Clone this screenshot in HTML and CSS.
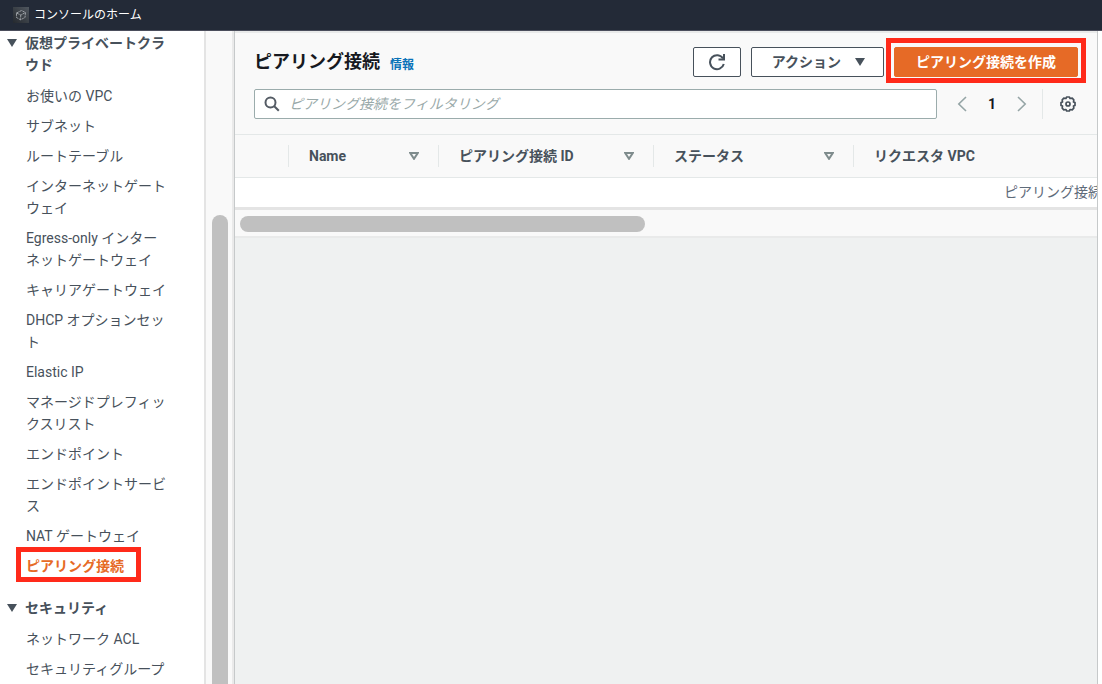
FILE: index.html
```html
<!DOCTYPE html>
<html lang="ja">
<head>
<meta charset="utf-8">
<title>ピアリング接続</title>
<link rel="stylesheet" href="styles.css">
</head>
<body>
<header class="topbar">
  <svg class="topbar-icon" viewBox="0 0 16 16" aria-hidden="true">
    <defs><linearGradient id="tile" x1="0" y1="1" x2="1" y2="0"><stop offset="0" stop-color="#25292e"/><stop offset="1" stop-color="#50575f"/></linearGradient></defs>
    <rect width="16" height="16" fill="url(#tile)"/>
    <path d="M3.500 6 8.500 3.500l4 2-.5 5L7.500 12.800 3.500 10.500zM3.500 6l4.300 2 4.700-2.500M7.800 8l-.3 4.800" fill="none" stroke="#b4b8bd" stroke-width=".8" stroke-dasharray="2.500 .8"/>
  </svg>
  <a class="topbar-link" href="#">コンソールのホーム</a>
</header>
<div class="layout">
  <nav class="sidebar">
    <section class="group">
      <button class="group-title" type="button"><span class="caret"></span><span>仮想プライベートクラウド</span></button>
      <ul class="links">
        <li><a href="#">お使いの VPC</a></li>
        <li><a href="#">サブネット</a></li>
        <li><a href="#">ルートテーブル</a></li>
        <li><a href="#">インターネットゲートウェイ</a></li>
        <li><a href="#">Egress-only インターネットゲートウェイ</a></li>
        <li><a href="#">キャリアゲートウェイ</a></li>
        <li><a href="#">DHCP オプションセット</a></li>
        <li><a href="#">Elastic IP</a></li>
        <li><a href="#">マネージドプレフィックスリスト</a></li>
        <li><a href="#">エンドポイント</a></li>
        <li><a href="#">エンドポイントサービス</a></li>
        <li><a href="#">NAT ゲートウェイ</a></li>
        <li><a class="current" href="#" aria-current="page">ピアリング接続</a></li>
      </ul>
    </section>
    <section class="group">
      <button class="group-title" type="button"><span class="caret"></span><span>セキュリティ</span></button>
      <ul class="links">
        <li><a href="#">ネットワーク ACL</a></li>
        <li><a href="#">セキュリティグループ</a></li>
      </ul>
    </section>
  </nav>
  <div class="vscroll"><div class="vscroll-thumb"></div></div>
  <main class="panel">
    <div class="panel-head">
      <div class="title-row">
        <h1>ピアリング接続</h1>
        <a class="info" href="#">情報</a>
        <div class="actions">
          <button class="btn btn-refresh" type="button" aria-label="更新">
            <svg width="18" height="18" viewBox="0 0 18 18" fill="none" stroke="#47515b" stroke-width="2"><path d="M15.800 11a7 7 0 1 1-.8-5.500"/><path d="M16 1v5.500h-5.500"/></svg>
          </button>
          <button class="btn btn-action" type="button">アクション<span class="caret"></span></button>
          <button class="btn btn-create" type="button">ピアリング接続を作成</button>
        </div>
      </div>
      <div class="filter-row">
        <div class="search">
          <svg width="16" height="16" viewBox="0 0 16 16" fill="none" stroke="#545b64" stroke-width="2"><circle cx="6.500" cy="6.500" r="5"/><path d="m10 10 4.800 4.800"/></svg>
          <input type="search" aria-label="ピアリング接続をフィルタリング" placeholder="ピアリング接続をフィルタリング">
        </div>
        <div class="pager">
          <button class="icon-btn" type="button" aria-label="前へ"><svg width="16" height="16" viewBox="0 0 16 16" fill="none" stroke="#95a5a6" stroke-width="1.600"><path d="M12 1 4.800 8l7.200 7"/></svg></button>
          <button class="icon-btn page" type="button">1</button>
          <button class="icon-btn" type="button" aria-label="次へ"><svg width="16" height="16" viewBox="0 0 16 16" fill="none" stroke="#95a5a6" stroke-width="1.600"><path d="m4 1 7.200 7L4 15"/></svg></button>
          <div class="prefs">
            <button class="icon-btn" type="button" aria-label="設定"><svg width="16" height="16" viewBox="0 0 16 16" fill="none" stroke="#47515b" stroke-width="1.700" stroke-linejoin="round"><path d="M6.600 1h2.800l.6 1.500 2.200-.3 1.600 1.600-.3 2.200 1.500.6v2.800l-1.500.6.3 2.200-1.600 1.600-2.200-.3-.6 1.500H6.600L6 13.500l-2.200.3-1.600-1.600.3-2.200L1 9.400V6.600L2.500 6l-.3-2.200 1.600-1.600 2.200.3z"/><circle cx="8" cy="8" r="2"/></svg></button>
          </div>
        </div>
      </div>
    </div>
    <div class="table-wrap">
      <table>
        <colgroup><col class="c-select"><col class="c-name"><col class="c-id"><col class="c-status"><col></colgroup>
        <thead>
          <tr>
            <td></td>
            <th scope="col"><div class="th">Name<svg class="sort" viewBox="0 0 10 8"><path d="M1.200 1h7.600L5 6.800z"/></svg></div></th>
            <th scope="col"><div class="th">ピアリング接続 ID<svg class="sort" viewBox="0 0 10 8"><path d="M1.200 1h7.600L5 6.800z"/></svg></div></th>
            <th scope="col"><div class="th">ステータス<svg class="sort" viewBox="0 0 10 8"><path d="M1.200 1h7.600L5 6.800z"/></svg></div></th>
            <th scope="col"><div class="th">リクエスタ VPC</div></th>
          </tr>
        </thead>
        <tbody><tr><td class="empty" colspan="5">ピアリング接続</td></tr></tbody>
      </table>
    </div>
    <div class="hscroll"><div class="hscroll-thumb"></div></div>
  </main>
</div>
</body>
</html>
```
FILE: styles.css
```css
* { box-sizing: border-box; }

body {
  margin: 0;
  height: 100vh;
  display: flex;
  flex-direction: column;
  overflow: hidden;
  background: #fff;
  color: #47515b;
  font: 14px/22px Roboto, "Noto Sans CJK JP", sans-serif;
}

button, input { font: inherit; color: inherit; }
button { cursor: pointer; }
a { color: inherit; text-decoration: none; }

.topbar {
  display: flex;
  flex: none;
  align-items: center;
  gap: 5px;
  height: 31px;
  padding: 0 13px;
  background: #232a37;
  border-bottom: 1px solid #4b4e5c;
}
.topbar-icon { width: 16px; height: 16px; }
.topbar-link { color: #fff; font-size: 12px; }

.layout { display: flex; flex: 1; min-height: 0; }

.sidebar {
  flex: none;
  width: 206px;
  padding: 1px 36px 0 7px;
  overflow: hidden;
  border-right: 2px solid #e4e4e4;
}
.group { margin-bottom: 20px; }
.group-title {
  display: flex;
  gap: 8px;
  width: 100%;
  margin-bottom: 9px;
  padding: 0;
  border: 0;
  background: none;
  font-weight: 700;
  text-align: left;
}
.caret {
  flex: none;
  width: 10px;
  height: 8px;
  background: #47515b;
  clip-path: polygon(0 0, 100% 0, 50% 100%);
}
.group-title .caret { margin-top: 7px; }
.links {
  display: flex;
  flex-direction: column;
  gap: 8px;
  margin: 0;
  padding: 0 0 0 19px;
  list-style: none;
}
.links a { display: inline-block; vertical-align: top; }
.links .current { position: relative; color: #e66a26; font-weight: 700; }
.current::after {
  content: "";
  position: absolute;
  inset: -8px -17px -5px -10px;
  border: 5px solid #ff2a1a;
}

.vscroll {
  flex: none;
  width: 29px;
  padding: 184px 4px 0 6px;
  overflow: hidden;
  background: #f9f9f9;
  border-right: 1px solid #c6c9ca;
  box-shadow: inset -2px 0 #eaeaea;
}
.vscroll-thumb { width: 16px; height: 100%; border-radius: 8px 8px 0 0; background: #c0c0c0; }

.panel {
  flex: 1;
  min-width: 0;
  margin-right: 4px;
  background: #eff1f1;
  border-right: 1px solid #c6c9ca;
}
.panel-head {
  display: flex;
  flex-direction: column;
  gap: 12px;
  padding: 14px 19px 15px;
  background: #f9f9f9;
  border-top: 2px solid #e9eaea;
  border-bottom: 1px solid #e4e8e8;
}
.title-row { display: flex; align-items: center; gap: 10px; height: 30px; }
h1 { margin: 0; color: #16191f; font-size: 18px; line-height: 30px; }
.info { padding-top: 6px; color: #0972b8; font-size: 12px; font-weight: 700; }
.actions { display: flex; gap: 10px; margin-left: auto; }
.btn {
  display: flex;
  align-items: center;
  justify-content: center;
  height: 30px;
  padding: 0 20px;
  border: 1px solid #47515b;
  border-radius: 2px;
  background: #fff;
  font-weight: 700;
}
.btn-refresh { width: 48px; padding: 0; }
.btn-action { gap: 14px; padding: 0 18px 0 20px; }
.btn-create { position: relative; padding: 0 21px; border-color: #e66a26; background: #e66a26; color: #fff; }
.btn-create::after {
  content: "";
  position: absolute;
  inset: -10px -9px -7px -9px;
  border: 5px solid #ff2a1a;
}

.filter-row { display: flex; align-items: center; gap: 15px; }
.search {
  display: flex;
  flex: 1;
  align-items: center;
  gap: 9px;
  height: 30px;
  padding: 0 9px;
  border: 1px solid #9bacac;
  border-radius: 2px;
  background: #fff;
}
.search input { flex: 1; min-width: 0; padding: 0; border: 0; outline: 0; background: none; }
.search input::placeholder { color: #99a9a9; font-style: italic; opacity: 1; }
.pager { display: flex; align-items: center; gap: 10px; }
.icon-btn {
  display: flex;
  align-items: center;
  justify-content: center;
  width: 20px;
  height: 30px;
  padding: 0;
  border: 0;
  background: none;
}
.page { color: #16191f; font-weight: 700; }
.prefs { padding-left: 15px; border-left: 1px solid #e4e8e8; }

.table-wrap { overflow: hidden; background: #fff; border-bottom: 3px solid #e4e4e4; }
table { width: 1636px; table-layout: fixed; border-collapse: collapse; }
.c-select { width: 53px; }
.c-name { width: 150px; }
.c-id { width: 215px; }
.c-status { width: 200px; }
thead { background: #f9f9f9; }
thead tr { height: 42px; border-bottom: 1px solid #e4e8e8; }
th, td { padding: 0; }
.th {
  display: flex;
  align-items: center;
  justify-content: space-between;
  padding: 0 19px 0 20px;
  border-left: 1px solid #e4e8e8;
}
.sort { width: 10px; height: 8px; fill: none; stroke: #7f8c8d; stroke-width: 2; }
.empty { height: 30px; color: #5f6b7a; text-align: center; }

.hscroll { height: 28px; padding: 6px 5px; background: #f9f9f9; border-bottom: 2px solid #e9eaea; }
.hscroll-thumb { width: 47.5%; height: 16px; border-radius: 8px; background: #c0c0c0; }
```
